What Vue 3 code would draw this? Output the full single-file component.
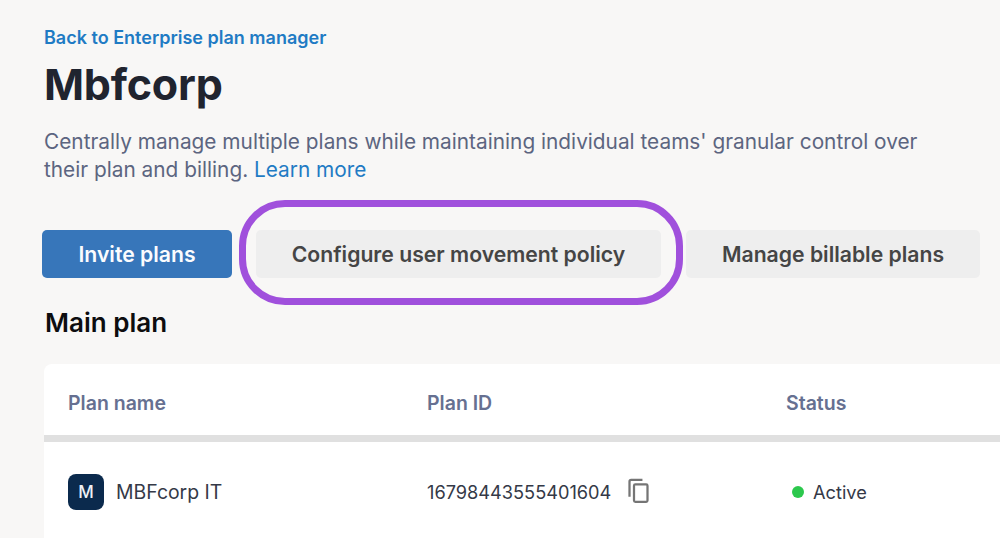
<template>
  <main class="page">
    <a class="back">Back to Enterprise plan manager</a>
    <h1 class="title">Mbfcorp</h1>
    <p class="intro">
      Centrally manage multiple plans while maintaining individual teams' granular control over
      their plan and billing. <a class="learn">Learn more</a>
    </p>
    <div class="actions">
      <button class="btn primary">Invite plans</button>
      <button class="btn config">
        Configure user movement policy
        <span class="ring"></span>
      </button>
      <button class="btn manage">Manage billable plans</button>
    </div>
    <h2 class="section">Main plan</h2>
    <section class="card">
      <div class="grid head">
        <div>Plan name</div>
        <div>Plan ID</div>
        <div>Status</div>
      </div>
      <div class="grid row">
        <div class="name">
          <span class="avatar">M</span>
          <span>MBFcorp IT</span>
        </div>
        <div class="id">
          <span>16798443555401604</span>
          <svg class="copy" viewBox="0 0 24 24" width="27" height="27" fill="none" stroke="#757575" stroke-width="2">
            <path d="M15.5 2.5H5.5a1.5 1.5 0 0 0-1.5 1.5v13.5" />
            <rect x="8" y="6.5" width="12" height="15.5" rx="1.2" />
          </svg>
        </div>
        <div class="status">
          <span class="dot"></span>
          <span>Active</span>
        </div>
      </div>
    </section>
  </main>
</template>

<script setup>
</script>

<style>
html, body { margin: 0; background: #f8f7f6; overflow: hidden; }
</style>

<style scoped>
.page {
  width: 1000px;
  height: 538px;
  box-sizing: border-box;
  padding: 27px 0 0 44px;
  background: #f8f7f6;
  font-family: Inter, "Liberation Sans", sans-serif;
  overflow: hidden;
}
.back {
  display: block;
  color: #1f7bc4;
  font-size: 18px;
  font-weight: 600;
  line-height: 22px;
}
.title {
  margin: 7px 0 0;
  font-size: 43px;
  font-weight: 700;
  line-height: 56px;
  letter-spacing: -0.2px;
  color: #20242f;
}
.intro {
  margin: 16px 0 0;
  width: 900px;
  font-size: 20.82px;
  line-height: 28px;
  color: #5c6580;
}
.learn { color: #1f7bc4; }
.actions {
  display: flex;
  gap: 24px;
  margin: 46px 0 0 -2px;
}
.btn {
  position: relative;
  height: 48px;
  border: none;
  border-radius: 5px;
  font-family: inherit;
  font-size: 21.2px;
  font-weight: 600;
  padding: 0;
  background: #eeeeee;
  color: #454545;
}
.primary { width: 190px; background: #3776ba; color: #fbfcfe; }
.config { width: 405px; }
.manage { width: 294px; margin-left: 1px; }
.ring {
  position: absolute;
  left: -17px;
  top: -30px;
  width: 444px;
  height: 105px;
  box-sizing: border-box;
  border: 7px solid #a050dc;
  border-radius: 46px;
}
.section {
  margin: 28px 0 0 1px;
  font-size: 26px;
  font-weight: 600;
  line-height: 34px;
  color: #0d0d0f;
}
.card {
  margin-top: 24px;
  height: 200px;
  background: #fff;
  border-radius: 8px 0 0 0;
}
.grid {
  display: grid;
  grid-template-columns: 359px 359px 1fr;
  padding-left: 24px;
}
.head {
  height: 71px;
  align-items: center;
  box-sizing: border-box;
  padding-top: 7px;
  font-size: 19.5px;
  font-weight: 600;
  color: #667091;
}
.row {
  border-top: 7px solid #e0e0e0;
  height: 107px;
  align-items: center;
  font-size: 18.2px;
  color: #343947;
  box-sizing: border-box;
}
.name { display: flex; align-items: center; gap: 12px; font-size: 19.4px; }
.avatar {
  width: 36px;
  height: 36px;
  border-radius: 8px;
  background: #0b2a4d;
  color: #eef1f5;
  display: flex;
  align-items: center;
  justify-content: center;
  font-size: 17px;
  font-weight: 500;
}
.id { display: flex; align-items: center; gap: 14px; }
.copy { margin-top: -4px; }
.status { display: flex; align-items: center; gap: 9px; padding-left: 6px; }
.dot { width: 12px; height: 12px; border-radius: 50%; background: #2cc84d; }
</style>
